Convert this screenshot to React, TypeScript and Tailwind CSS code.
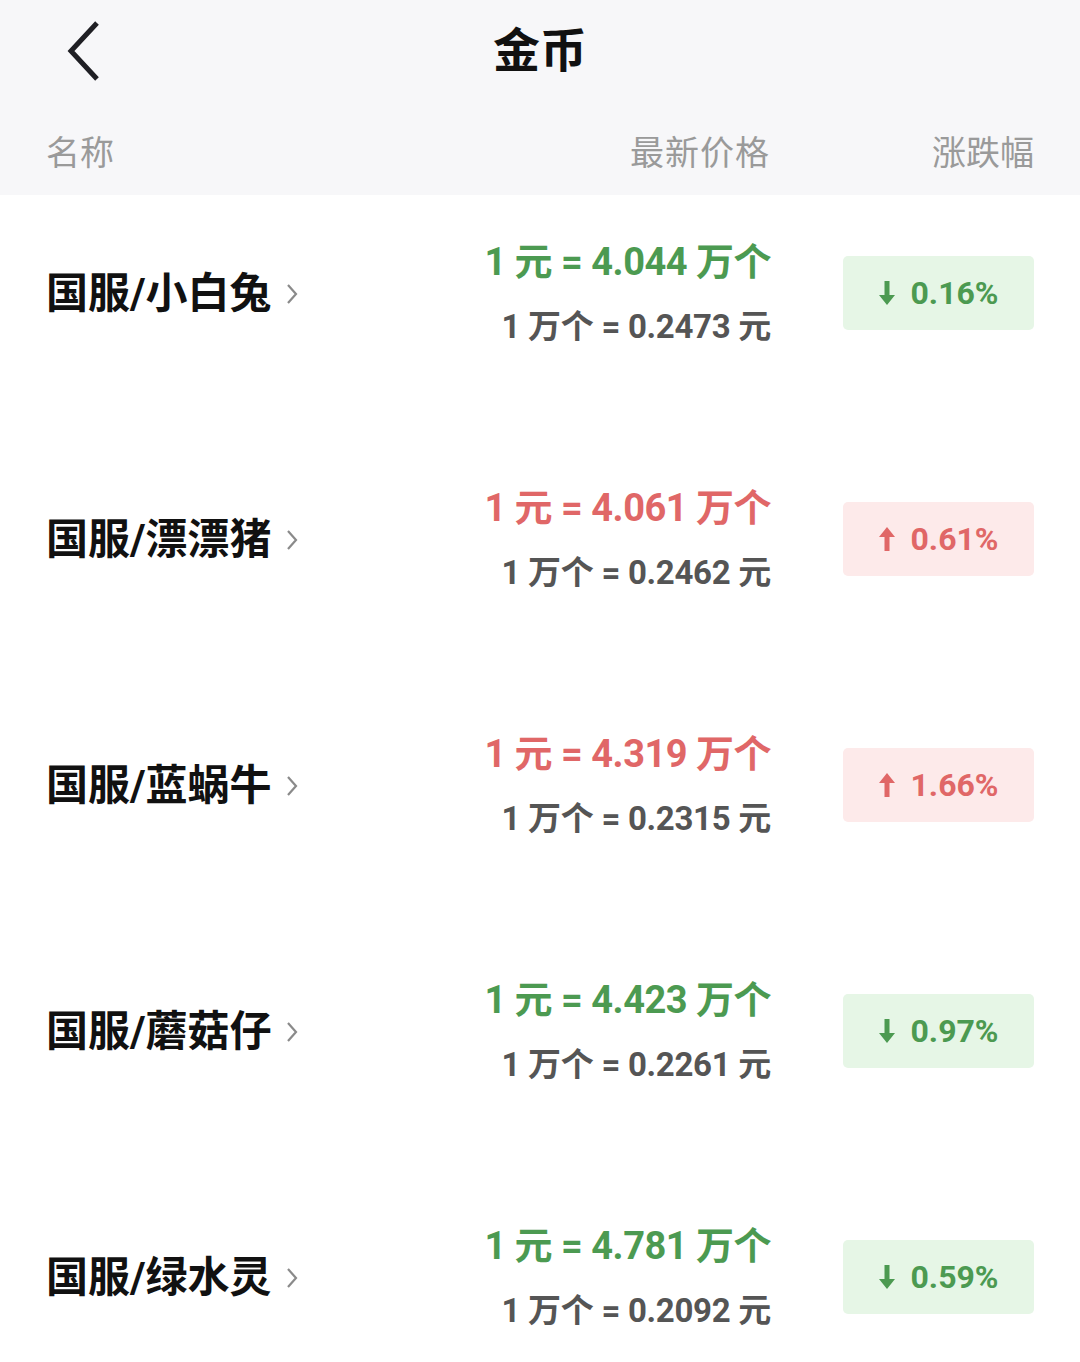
import React from 'react';

interface CoinRow {
  name: string;
  rate: string;
  reverse: string;
  change: string;
  up: boolean;
}

const rows: CoinRow[] = [
  { name: '国服/小白兔', rate: '4.044', reverse: '0.2473', change: '0.16%', up: false },
  { name: '国服/漂漂猪', rate: '4.061', reverse: '0.2462', change: '0.61%', up: true },
  { name: '国服/蓝蜗牛', rate: '4.319', reverse: '0.2315', change: '1.66%', up: true },
  { name: '国服/蘑菇仔', rate: '4.423', reverse: '0.2261', change: '0.97%', up: false },
  { name: '国服/绿水灵', rate: '4.781', reverse: '0.2092', change: '0.59%', up: false },
];

const Arrow: React.FC<{ up: boolean }> = ({ up }) => (
  <svg width="18" height="26" viewBox="0 0 18 26" fill="currentColor" className={up ? '' : 'rotate-180'}>
    <path d="M9 1 L17 11 L11.5 11 L11.5 25 L6.5 25 L6.5 11 L1 11 Z" />
  </svg>
);

export default function App() {
  return (
    <div
      className="w-[1080px] h-[1362px] bg-white overflow-hidden"
      style={{ fontFamily: 'Roboto, "Noto Sans CJK SC", sans-serif' }}
    >
      <div className="bg-[#f7f7f9] h-[195px] flex flex-col">
        <div className="relative h-[100px] flex items-center justify-center">
          <svg
            className="absolute left-[64px] top-[20px]"
            width="40"
            height="62"
            viewBox="0 0 40 62"
            fill="none"
            stroke="#1f1f24"
            strokeWidth="5"
          >
            <path d="M33 3 L7 31 L33 59" />
          </svg>
          <span className="text-[47px] font-bold text-[#111] leading-none">金币</span>
        </div>
        <div className="flex items-center h-[95px] pl-[46px] pr-[46px] text-[34px] text-[#9a9a9a] pt-[12px]">
          <span className="flex-1">名称</span>
          <span className="tracking-[1px]">最新价格</span>
          <span className="w-[264px] text-right">涨跌幅</span>
        </div>
      </div>

      <div className="flex flex-col gap-[50px]">
        {rows.map((r) => {
          const color = r.up ? 'text-[#e06767]' : 'text-[#4c9a51]';
          return (
            <div key={r.name} className="h-[196px] flex items-center pl-[46px] pr-[46px]">
              <div className="flex-1 flex items-center">
                <span className="text-[42px] font-bold text-[#111]">{r.name}</span>
                <svg className="ml-[14px] mt-[2px]" width="13" height="24" viewBox="0 0 13 24" fill="none" stroke="#8a8a8a" strokeWidth="2.2">
                  <path d="M2 3 L10 12 L2 21" />
                </svg>
              </div>
              <div className="flex flex-col items-end mr-[72px] mt-[2px]">
                <div className={`text-[38px] font-bold leading-[48px] tracking-[-0.5px] ${color}`}>
                  1 元 = {r.rate} 万个
                </div>
                <div className="text-[33px] font-bold text-[#555] leading-[46px] mt-[18px] tracking-[-0.3px]">
                  1 万个 = {r.reverse} 元
                </div>
              </div>
              <div
                className={`w-[191px] h-[74px] rounded-[5px] flex items-center justify-center gap-[14px] ${
                  r.up ? 'bg-[#fdeaea]' : 'bg-[#e6f6e6]'
                } ${color}`}
              >
                <Arrow up={r.up} />
                <span className="text-[32px] font-bold">{r.change}</span>
              </div>
            </div>
          );
        })}
      </div>
    </div>
  );
}
